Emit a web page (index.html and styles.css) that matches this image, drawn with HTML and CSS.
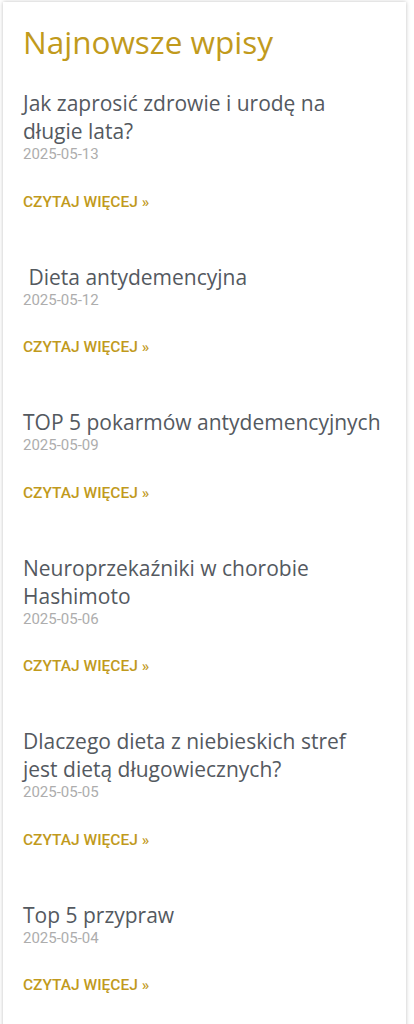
FILE: index.html
```html
<!DOCTYPE html>
<html lang="pl">
<head>
  <meta charset="UTF-8" />
  <meta name="viewport" content="width=device-width, initial-scale=1.0" />
  <title>Najnowsze wpisy</title>
  <link rel="stylesheet" href="styles.css">
</head>
<body>

  <div class="recent-posts">
    <h2 class="recent-title">Najnowsze wpisy</h2>

    <article class="post">
      <h3 class="post-title">Jak zaprosić zdrowie i urodę na długie lata?</h3>
      <div class="post-date">2025-05-13</div>
      <a class="read-more" href="#">Czytaj więcej »</a>
    </article>

    <article class="post">
      <h3 class="post-title">&nbsp;Dieta antydemencyjna</h3>
      <div class="post-date">2025-05-12</div>
      <a class="read-more" href="#">Czytaj więcej »</a>
    </article>

    <article class="post">
      <h3 class="post-title">TOP 5 pokarmów antydemencyjnych</h3>
      <div class="post-date">2025-05-09</div>
      <a class="read-more" href="#">Czytaj więcej »</a>
    </article>

    <article class="post">
      <h3 class="post-title">Neuroprzekaźniki w chorobie Hashimoto</h3>
      <div class="post-date">2025-05-06</div>
      <a class="read-more" href="#">Czytaj więcej »</a>
    </article>

    <article class="post">
      <h3 class="post-title">Dlaczego dieta z niebieskich stref jest dietą długowiecznych?</h3>
      <div class="post-date">2025-05-05</div>
      <a class="read-more" href="#">Czytaj więcej »</a>
    </article>

    <article class="post">
      <h3 class="post-title">Top 5 przypraw</h3>
      <div class="post-date">2025-05-04</div>
      <a class="read-more" href="#">Czytaj więcej »</a>
    </article>
  </div>

</body>
</html>
```

FILE: styles.css
```css
body {
  margin: 0;
  padding: 0;
  background-color: #fff;
  font-family: 'Open Sans', sans-serif;
}

.recent-posts {
  margin: 2px 8px 0 3px;
  padding: 21px 24px 30px 20px;
  background-color: #fff;
  box-shadow: 0 0 4px rgba(0, 0, 0, 0.25);
}

.recent-title {
  margin: 0 0 28px;
  font-size: 31.5px;
  line-height: 38px;
  font-weight: 400;
  color: #c19a1c;
}

.post {
  margin-bottom: 51px;
}

.post-title {
  margin: 0;
  font-size: 21px;
  line-height: 28px;
  font-weight: 400;
  color: #54595f;
}

.post-date {
  font-family: 'Roboto', sans-serif;
  font-size: 15px;
  line-height: 18px;
  color: #adadad;
}

.read-more {
  display: block;
  margin-top: 28.5px;
  font-family: 'Roboto', sans-serif;
  font-size: 15.5px;
  line-height: 20px;
  font-weight: 500;
  text-transform: uppercase;
  text-decoration: none;
  color: #c19a1c;
}
```
